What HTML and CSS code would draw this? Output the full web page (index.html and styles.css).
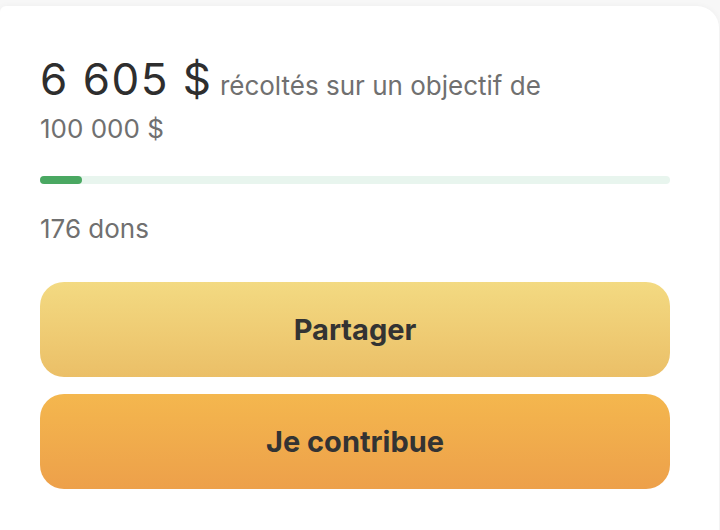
FILE: index.html
```html
<!DOCTYPE html>
<html lang="fr">
<head>
  <meta charset="UTF-8">
  <title>Collecte</title>
  <link rel="stylesheet" href="styles.css">
</head>
<body>

  <div class="card">
    <p class="raised">
      <span class="amount">6 605 $</span>
      <span class="goal">récoltés sur un objectif de <span class="nowrap">100 000 $</span></span>
    </p>

    <div class="progress">
      <div class="progress-fill" style="width: 6.6%"></div>
    </div>

    <p class="count">176 dons</p>

    <button class="btn btn-share">Partager</button>
    <button class="btn btn-give">Je contribue</button>
  </div>

</body>
</html>
```

FILE: styles.css
```css
body {
  margin: 0;
  padding-top: 6px;
  background: #f7f7f7;
  font-family: Inter, "Open Sans", sans-serif;
  color: #333;
  overflow: hidden;
}
.card {
  width: 719px;
  height: 560px;
  box-sizing: border-box;
  padding: 52px 49px 0 40px;
  background: #fff;
  border-radius: 6px 22px 0 0;
  box-shadow: 0 0 6px rgba(0, 0, 0, 0.04);
}
.raised {
  margin: 0;
  max-width: 520px;
  font-size: 26px;
  line-height: 43px;
}
.amount {
  font-size: 44px;
  color: #2e2e2e;
  letter-spacing: 1.5px;
}
.goal {
  color: #707070;
}
.nowrap {
  white-space: nowrap;
}
.progress {
  margin-top: 26px;
  height: 8px;
  background: #e8f5ee;
  border-radius: 4px;
}
.progress-fill {
  height: 100%;
  background: #4aa862;
  border-radius: 4px;
}
.count {
  margin: 29px 0 0;
  font-size: 26px;
  color: #707070;
}
.btn {
  display: block;
  width: 100%;
  height: 95px;
  margin-top: 38px;
  border: none;
  border-radius: 24px;
  font-family: inherit;
  font-size: 29px;
  font-weight: 700;
  color: #333;
  cursor: pointer;
}
.btn-share {
  background: linear-gradient(#f3da82, #ebbf67);
}
.btn-give {
  margin-top: 17px;
  background: linear-gradient(#f4b74e, #eda04a);
}
```
